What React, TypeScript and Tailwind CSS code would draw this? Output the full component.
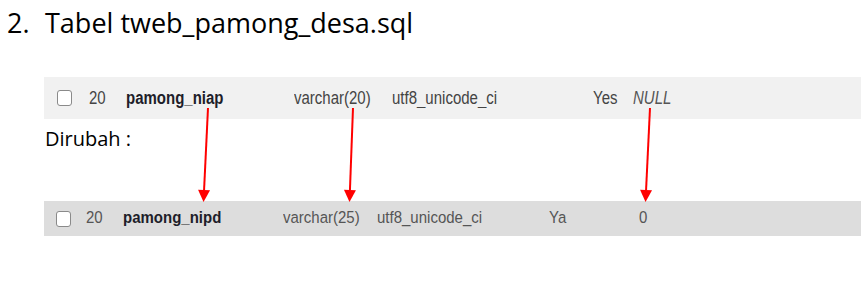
import React from "react";

const Arrow = ({ x1, y1, x2, y2 }: { x1: number; y1: number; x2: number; y2: number }) => {
  const headLen = 12;
  const dx = x2 - x1;
  const dy = y2 - y1;
  const len = Math.sqrt(dx * dx + dy * dy);
  const ux = dx / len;
  const uy = dy / len;
  const bx = x2 - ux * headLen;
  const by = y2 - uy * headLen;
  const px = -uy * 6;
  const py = ux * 6;
  return (
    <g>
      <line x1={x1} y1={y1} x2={bx} y2={by} stroke="#ff0000" strokeWidth={2} />
      <polygon points={`${x2},${y2} ${bx + px},${by + py} ${bx - px},${by - py}`} fill="#ff0000" />
    </g>
  );
};

const Checkbox = () => (
  <div className="w-[15px] h-[16px] rounded-[3px] border border-[#8a8a8a] bg-white" />
);

export default function App() {
  return (
    <div className="relative w-[861px] h-[283px] bg-white overflow-hidden">
      <div
        className="flex pt-[4px] pl-[7px] text-[27px] leading-[37px] text-black"
        style={{ fontFamily: '"Open Sans", sans-serif' }}
      >
        <span className="w-[38px]">2.</span>
        <span>Tabel tweb_pamong_desa.sql</span>
      </div>

      <div
        className="mt-[36px] ml-[44px] h-[42px] bg-[#f1f1f1] flex items-center pl-[13px] text-[15px] text-[#444]"
        style={{ fontFamily: '"Liberation Sans", Arial, sans-serif' }}
      >
        <div className="w-[32px]"><Checkbox /></div>
        <div className="w-[37px] scale-y-[1.25]">20</div>
        <div className="w-[168px] font-bold text-[#1e1e2a] scale-y-[1.2]">pamong_niap</div>
        <div className="w-[98px] scale-y-[1.25]">varchar(20)</div>
        <div className="w-[201px] scale-y-[1.25]">utf8_unicode_ci</div>
        <div className="w-[40px] scale-y-[1.25]">Yes</div>
        <div className="italic text-[#555] scale-y-[1.25]">NULL</div>
      </div>

      <div
        className="mt-[6px] pl-[45px] text-[20px] leading-[27px] text-black"
        style={{ fontFamily: '"Open Sans", sans-serif' }}
      >
        Dirubah :
      </div>

      <div
        className="mt-[49px] ml-[44px] h-[35px] bg-[#dddddd] flex items-center pl-[12px] text-[15px] text-[#555]"
        style={{ fontFamily: '"Liberation Sans", Arial, sans-serif' }}
      >
        <div className="w-[30px]"><Checkbox /></div>
        <div className="w-[37px] scale-y-[1.1]">20</div>
        <div className="w-[160px] font-bold text-[#1e1e2a] scale-y-[1.1]">pamong_nipd</div>
        <div className="w-[94px] scale-y-[1.1]">varchar(25)</div>
        <div className="w-[172px] scale-y-[1.1]">utf8_unicode_ci</div>
        <div className="w-[90px] scale-y-[1.1]">Ya</div>
        <div className="scale-y-[1.1]">0</div>
      </div>

      <svg className="absolute inset-0 pointer-events-none" width={861} height={283}>
        <Arrow x1={208} y1={108} x2={203.5} y2={202} />
        <Arrow x1={353} y1={108} x2={349.5} y2={202} />
        <Arrow x1={650} y1={108} x2={645.5} y2={202} />
      </svg>
    </div>
  );
}
